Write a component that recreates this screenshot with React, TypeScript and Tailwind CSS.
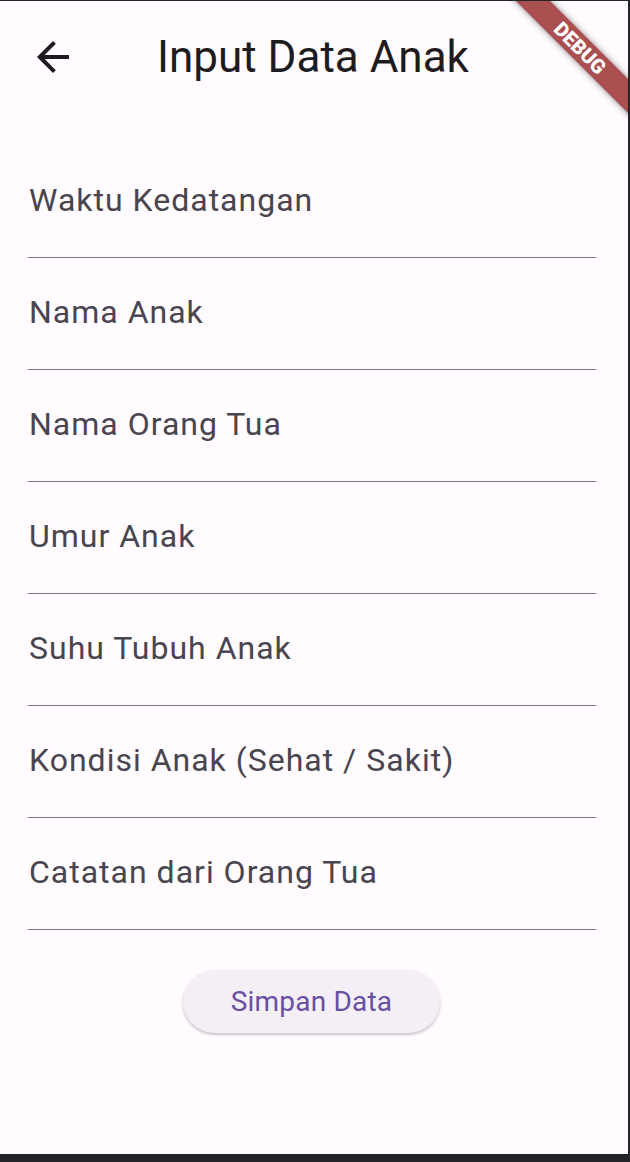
import React from "react";

const fields = [
  "Waktu Kedatangan",
  "Nama Anak",
  "Nama Orang Tua",
  "Umur Anak",
  "Suhu Tubuh Anak",
  "Kondisi Anak (Sehat / Sakit)",
  "Catatan dari Orang Tua",
];

export default function App() {
  return (
    <div className="w-[630px] h-[1162px] bg-[#232428] pt-[1px] pr-[2px] pb-[8px]" style={{ fontFamily: "Roboto, 'Noto Sans', sans-serif" }}>
      <div className="relative w-[628px] h-[1153px] bg-[#fffbfe] overflow-hidden flex flex-col">
        {/* App bar */}
        <div className="h-[112px] flex items-center">
          <div className="w-[110px] pl-[29px] flex items-center">
            <svg width="48" height="48" viewBox="0 0 24 24" fill="#1d1b20">
              <path d="M20 11H7.83l5.59-5.59L12 4l-8 8 8 8 1.41-1.41L7.83 13H20v-2z" />
            </svg>
          </div>
          <div className="flex-1 text-center text-[44px] leading-none text-[#1d1b20] -ml-[2px]">Input Data Anak</div>
          <div className="w-[110px]" />
        </div>

        {/* Fields */}
        <div className="pt-[33px] flex flex-col">
          {fields.map((f) => (
            <div key={f} className="ml-[28px] w-[568px] h-[112px] pb-[3px] flex items-center border-b-[1.5px] border-[#79747e]">
              <span className="pl-[1px] text-[32px] leading-none tracking-[1px] text-[#49454f]">{f}</span>
            </div>
          ))}
        </div>

        {/* Button */}
        <div className="mt-[40px]">
          <button className="ml-[183px] w-[257px] h-[63px] rounded-full bg-[#f4eff6] text-[#6750a4] text-[28px] leading-none tracking-[0.2px] shadow-[0_2px_3px_rgba(0,0,0,0.22)]">
            Simpan Data
          </button>
        </div>

        {/* Debug banner */}
        <div className="absolute left-[480px] top-[35px] w-[200px] h-[24px] rotate-45 bg-[#a94f4f] shadow-[0_0_6px_rgba(0,0,0,0.5)] flex items-center justify-center">
          <span className="text-white font-black text-[20px] leading-none">DEBUG</span>
        </div>
      </div>
    </div>
  );
}
